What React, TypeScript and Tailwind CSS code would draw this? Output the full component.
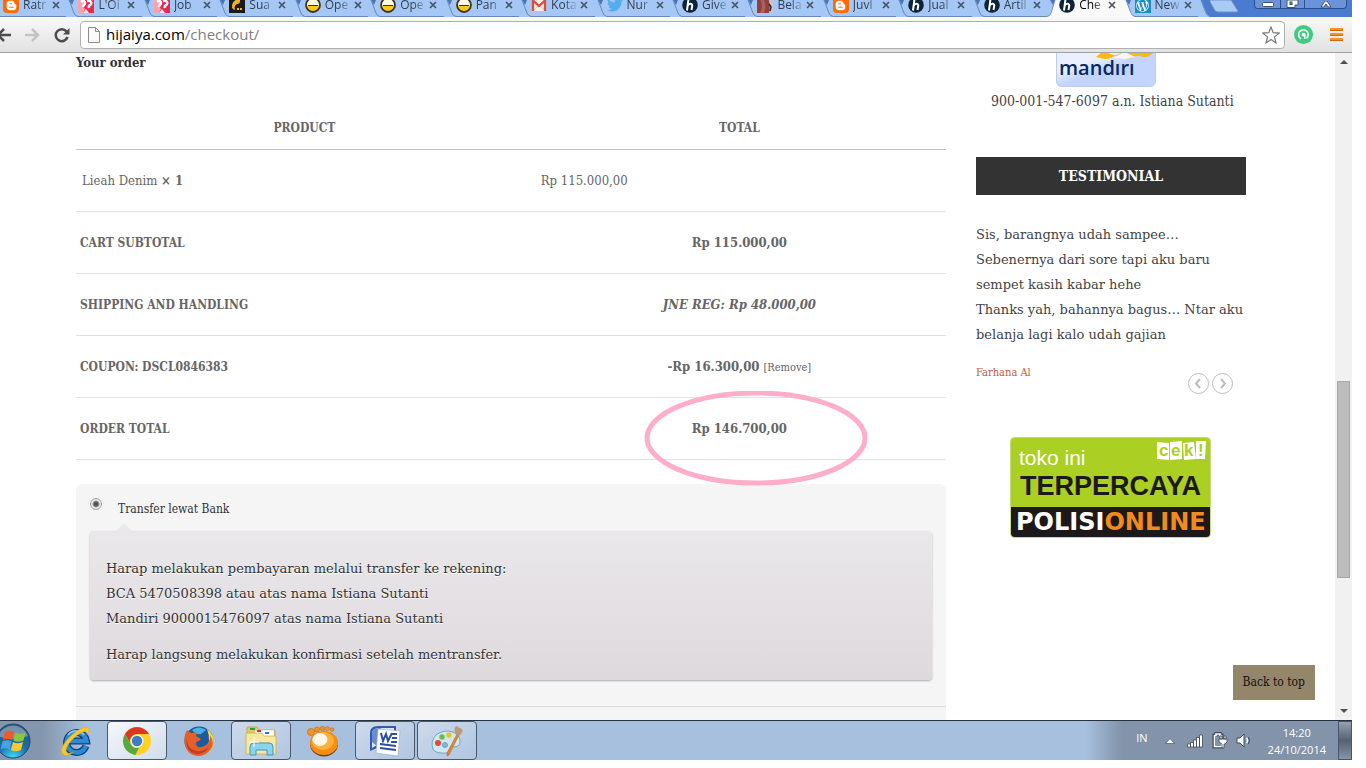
import type { ReactNode } from "react";
import { FaBloggerB, FaTwitter, FaWordpressSimple } from "react-icons/fa";

interface TabItem {
  title: string;
  icon: ReactNode;
  active?: boolean;
}

function BloggerIcon() {
  return (
    <span className="flex size-4 items-center justify-center rounded-sm bg-[#ff6a00] text-white">
      <FaBloggerB size={11} />
    </span>
  );
}

function RedIcon() {
  return (
    <svg viewBox="0 0 16 16" className="size-4">
      <rect width="16" height="16" fill="#e52a50" />
      <path d="M0 0h7l-2 4 2 2-2 3 2 3-2 4H0z" fill="#f4a3b1" />
      <path d="M3 5c2-2 4-1 4 1s-2 2-2 4M9 4c3-1 5 1 4 3s-3 1-2 4" stroke="#fff" strokeWidth="2.500" fill="none" />
      <path d="M5 16l3-4 3 4z" fill="#fbe3e6" />
    </svg>
  );
}

function BlackIcon() {
  return (
    <svg viewBox="0 0 16 16" className="size-4">
      <rect width="16" height="16" fill="#1c1a18" />
      <path d="M10 2C6 2 3 6 3 9s1 3 3 4c-1-3 0-5 2-6 2 0 3-1 3-3 0-1 0-2-1-2z" fill="#f5b324" />
      <path d="M8 12h6" stroke="#f5b324" strokeWidth="2" strokeDasharray="2 1" />
    </svg>
  );
}

function BowlIcon() {
  return (
    <svg viewBox="0 0 16 16" className="size-4">
      <circle cx="8" cy="8" r="7" fill="#fffbe2" />
      <path d="M1.500 8.500h13c0 3-2.500 6-6.500 6s-6.500-3-6.500-6z" fill="#ffc91c" />
      <path d="M3 8.500h10" stroke="#42321d" />
      <circle cx="8" cy="8" r="7" fill="none" stroke="#42321d" strokeWidth="1.800" />
    </svg>
  );
}

function GmailIcon() {
  return (
    <svg viewBox="0 0 16 16" className="size-4">
      <rect x="1" y="2.500" width="14" height="11.500" rx="1" fill="#f1efec" />
      <path d="M3 13l4-4m6 4L9 9" stroke="#cfcac4" />
      <path d="M2 14V3.500l6 5.500 6-5.500V14" fill="none" stroke="#dc4b3e" strokeWidth="2.300" />
    </svg>
  );
}

function HijaiyaIcon() {
  return (
    <svg viewBox="0 0 16 16" className="size-4">
      <circle cx="8" cy="8" r="7.800" fill="#0d2438" />
      <path d="M6.500 2L5 13.500M5.800 8.500c1-2 4.500-2.500 4.500 0L9.500 13" stroke="#fff" strokeWidth="2" fill="none" />
    </svg>
  );
}

function PhotoIcon() {
  return (
    <svg viewBox="0 0 16 16" className="size-4">
      <rect width="16" height="16" fill="#8d4141" />
      <path d="M11 0h5v16h-4c1-5 1-9-1-16z" fill="#c7c4cc" />
      <path d="M4 0c4 3 6 8 3 16H3C6 10 5 5 2 0z" fill="#ad5f5a" />
      <path d="M12 7l2 3-1 4" stroke="#33262c" strokeWidth="1.500" fill="none" />
    </svg>
  );
}

const tabs: TabItem[] = [
  { title: "Ratr", icon: <BloggerIcon /> },
  { title: "L'Oi", icon: <RedIcon /> },
  { title: "Job", icon: <RedIcon /> },
  { title: "Sua", icon: <BlackIcon /> },
  { title: "Ope", icon: <BowlIcon /> },
  { title: "Ope", icon: <BowlIcon /> },
  { title: "Pan", icon: <BowlIcon /> },
  { title: "Kota", icon: <GmailIcon /> },
  { title: "Nur", icon: <FaTwitter size={16} color="#55acee" /> },
  { title: "Give", icon: <HijaiyaIcon /> },
  { title: "Bela", icon: <PhotoIcon /> },
  { title: "Juvl", icon: <BloggerIcon /> },
  { title: "Jual", icon: <HijaiyaIcon /> },
  { title: "Artil", icon: <HijaiyaIcon /> },
  { title: "Che", icon: <HijaiyaIcon />, active: true },
  {
    title: "New",
    icon: (
      <span className="flex size-4 items-center justify-center bg-[#1e8cbe] text-white">
        <FaWordpressSimple size={13} />
      </span>
    ),
  },
];

const totals = [
  { label: "CART SUBTOTAL", value: "Rp 115.000,00" },
  { label: "SHIPPING AND HANDLING", value: "JNE REG: Rp 48.000,00", italic: true },
  { label: "COUPON: DSCL0846383", value: "-Rp 16.300,00", removable: true },
  { label: "ORDER TOTAL", value: "Rp 146.700,00", circled: true },
];

function Tab({ tab, beforeActive, last }: { tab: TabItem; beforeActive: boolean; last: boolean }) {
  const fill = tab.active ? "#f9f9f9" : "#a4c7f5";
  return (
    <div className={`flex h-[17px] min-w-0 flex-1 ${tab.active ? "bg-[#f9f9f9]" : "border-b border-[#6789b6] bg-[#a4c7f5]"}`}>
      <div className="-mt-[3px] flex h-4 min-w-0 flex-1 items-center">
        <span className="shrink-0">{tab.icon}</span>
        <span
          className={`ml-1 w-[27px] shrink-0 leading-4 whitespace-nowrap [mask-image:linear-gradient(to_right,#000_50%,transparent)] ${tab.active ? "text-black" : "text-[#333c4c]"}`}
        >
          {tab.title}
        </span>
        <button type="button" aria-label="Close tab" className="ml-0.5 shrink-0">
          <svg viewBox="0 0 8 8" className="size-2" stroke="#4b5462" strokeWidth="1.700">
            <path d="M1 1l6 6M7 1L1 7" />
          </svg>
        </button>
      </div>
      <svg viewBox="0 0 12 17" className="h-[17px] w-3 shrink-0">
        <rect width="12" height="17" fill={last ? "#4b7bce" : beforeActive ? "#f9f9f9" : "#a4c7f5"} />
        {beforeActive ? (
          <path d="M0 0h8L3 14l-3 3z" fill={fill} />
        ) : (
          <path d="M0 0h3l6 14 3 3H0z" fill={fill} />
        )}
        {!last && <path d="M3 0h5L6 5z" fill="#4b73b8" />}
        {beforeActive ? (
          <path d="M8 0L4 13q-1 3-4 3.500" fill="none" stroke="#6789b6" />
        ) : (
          <path d="M3 0l5 13q1 3 4 3.500" fill="none" stroke="#6789b6" />
        )}
      </svg>
    </div>
  );
}

function BrowserBar() {
  return (
    <header className="shrink-0 font-['Open_Sans',sans-serif]">
      <div className="flex h-[17px] bg-[#4b7bce] text-xs">
        <div className="w-[3px] border-b border-[#6789b6] bg-[#a4c7f5]" />
        <nav className="flex min-w-0 flex-1">
          {tabs.map((tab, index) => (
            <Tab key={index} tab={tab} beforeActive={!!tabs[index + 1]?.active} last={index === tabs.length - 1} />
          ))}
        </nav>
        <button type="button" aria-label="New tab" className="h-[13px] w-8">
          <svg viewBox="0 0 32 13" className="h-[13px] w-8">
            <path d="M-1 0h22l7 11q0 1-2 1H8q-3 0-4-3z" fill="#a9caf5" stroke="#6f93c9" />
          </svg>
        </button>
        <div className="ml-3 flex h-[9px] w-[93px] rounded-b border border-t-0 border-[#2e4f8c] bg-[#6b93db]">
          <button type="button" aria-label="Minimize" className="flex w-[26px] items-center justify-center border-r border-[#2e4f8c]">
            <svg viewBox="0 0 12 5" className="h-[5px] w-3">
              <rect x=".5" y=".5" width="11" height="4" rx="1" fill="#fff" stroke="#42516a" />
            </svg>
          </button>
          <button type="button" aria-label="Restore" className="flex w-6 items-center justify-center border-r border-[#2e4f8c]">
            <svg viewBox="0 0 13 8" className="h-2 w-[13px]" fill="#fff" stroke="#42516a">
              <path d="M4 0h8v5H9v2.500H1V0z" />
              <rect x="4" y="2" width="2" height="2.500" fill="#5f83c3" />
            </svg>
          </button>
          <button type="button" aria-label="Close" className="flex flex-1 items-center justify-center">
            <svg viewBox="0 0 12 7" className="h-[7px] w-3">
              <path d="M1 6l4-6h2l4 6H8L6 3 4 6z" fill="#fff" stroke="#42516a" />
            </svg>
          </button>
        </div>
        <div className="w-[5px]" />
      </div>

      <div className="flex h-9 items-center border-b border-[#a3a3a3] bg-linear-to-b from-[#f9f9f9] to-[#e2e2e2]">
        <button type="button" aria-label="Back" className="w-3">
          <svg viewBox="0 0 12 14" className="h-3.5 w-3" fill="none" stroke="#4d4d4d" strokeWidth="2.500">
            <path d="M0 7h11M4 1L-2 7l6 6" />
          </svg>
        </button>
        <button type="button" aria-label="Forward" className="ml-3 w-4">
          <svg viewBox="0 0 16 14" className="h-3.5 w-4" fill="none" stroke="#c3c3c3" strokeWidth="2.500">
            <path d="M1 7h13M8 1l6 6-6 6" />
          </svg>
        </button>
        <button type="button" aria-label="Reload" className="ml-3.5 w-4">
          <svg viewBox="0 0 16 16" className="size-4">
            <path d="M12.500 4.500A6 6 0 1 0 13.500 10" fill="none" stroke="#4d4d4d" strokeWidth="2.500" />
            <path d="M15.500 1v6.500H9z" fill="#4d4d4d" />
          </svg>
        </button>
        <div className="ml-2.5 flex h-7 flex-1 items-center rounded-sm border border-[#b0b0b0] bg-white pr-1 pl-[7px]">
          <svg viewBox="0 0 12 16" className="h-4 w-3 shrink-0" fill="#fafafa" stroke="#8d8d8d">
            <path d="M.5.5h7l4 4v11H.5zM7.500.5v4h4" />
          </svg>
          <a href="#checkout" className="ml-1.5 flex-1 text-[15px] text-[#808080]">
            <span className="text-black">hijaiya.com</span>/checkout/
          </a>
          <button type="button" aria-label="Bookmark this page">
            <svg viewBox="0 0 18 18" className="size-[18px]" fill="#fff" stroke="#777" strokeWidth="1.200">
              <path d="M9 1l2.200 5.700 6 .4-4.700 3.800L14 17l-5-3.400L4 17l1.500-6.100L.8 7.100l6-.4z" />
            </svg>
          </button>
        </div>
        <button type="button" aria-label="Extension" className="ml-[9px]">
          <svg viewBox="0 0 19 19" className="size-[19px]">
            <circle cx="9.500" cy="9.500" r="9.500" fill="#3fcb80" />
            <path d="M7 13.800A4.800 4.800 0 1 1 12.500 13.300" fill="none" stroke="#fff" strokeWidth="1.600" />
            <circle cx="9.600" cy="9.600" r="1.900" fill="#fff" />
            <path d="M10.800 9.500v4.500" stroke="#fff" strokeWidth="1.600" />
          </svg>
        </button>
        <button type="button" aria-label="Menu" className="mr-[9px] ml-[17px]">
          <svg viewBox="0 0 13 13" className="size-[13px]" fill="#f6921e">
            <path d="M0 0h13v3H0zM0 5h13v3H0zM0 10h13v3H0z" />
            <path d="M0 2h13v1H0zM0 7h13v1H0zM0 12h13v1H0z" fill="#d9660d" />
          </svg>
        </button>
      </div>
    </header>
  );
}

function OrderTable() {
  return (
    <table className="mt-8 w-full table-fixed border-collapse text-[13px] text-[#666]">
      <thead>
        <tr className="h-11 border-b border-[#c4c4c4]">
          <th className="w-[52.5%] pt-0.5 text-xs">PRODUCT</th>
          <th className="pt-0.5 text-xs">TOTAL</th>
        </tr>
      </thead>
      <tbody>
        <tr className="h-[62px] border-b border-[#e2e2e2]">
          <td className="pt-0.5 pl-1.5">
            Lieah Denim <strong>× 1</strong>
          </td>
          <td className="pt-0.5 pl-2">Rp 115.000,00</td>
        </tr>
        {totals.map((row) => (
          <tr key={row.label} className="h-[62px] border-b border-[#e2e2e2]">
            <th className="pt-0.5 pl-1 text-left text-xs">{row.label}</th>
            <td className="pt-0.5 text-center">
              <span className="relative inline-block">
                <strong className={row.italic ? "italic" : ""}>{row.value}</strong>
                {row.removable && (
                  <a href="#remove" className="ml-1 text-[11px]">
                    [Remove]
                  </a>
                )}
                {row.circled && (
                  <svg viewBox="0 0 224 96" className="absolute -top-7 left-1/2 -ml-24 h-24 w-56">
                    <ellipse cx="113" cy="47" rx="109" ry="45" fill="none" stroke="#ffaec9" strokeWidth="5" />
                  </svg>
                )}
              </span>
            </td>
          </tr>
        ))}
      </tbody>
    </table>
  );
}

function Payment() {
  return (
    <div className="mt-6 rounded-t-md bg-[#f5f5f5] text-[#333]">
      <div className="px-3.5 pt-3">
        <div className="flex h-[35px] gap-4">
          <input
            type="radio"
            id="bank"
            name="payment"
            defaultChecked
            className="mt-0.5 size-3 appearance-none rounded-full border border-[#9d9d9d] bg-[radial-gradient(circle,#555_0_2px,#eee_4px)]"
          />
          <label htmlFor="bank" className="pt-[3px] text-xs leading-5">
            Transfer lewat Bank
          </label>
        </div>
        <div className="relative rounded-sm bg-linear-to-b from-[#eae8ea] to-[#ded9dd] px-4 pt-[25px] pb-[13px] font-['DejaVu_Serif',serif] text-[13px] leading-[25px] shadow-[0_1px_2px_rgba(0,0,0,0.3)] [text-shadow:0_1px_0_#fff]">
          <div className="absolute -top-2 left-[26px] border-x-8 border-b-8 border-x-transparent border-b-[#eae8ea]" />
          <p>
            Harap melakukan pembayaran melalui transfer ke rekening:
            <br />
            BCA 5470508398 atau atas nama Istiana Sutanti
            <br />
            Mandiri 9000015476097 atas nama Istiana Sutanti
          </p>
          <p className="mt-[11px]">Harap langsung melakukan konfirmasi setelah mentransfer.</p>
        </div>
      </div>
      <div className="mt-[26px] h-10 border-t border-[#dcdcdc]" />
    </div>
  );
}

function Sidebar() {
  return (
    <aside className="w-[270px] shrink-0 text-[#444]">
      <svg viewBox="0 0 100 34" className="ml-20 h-[34px] w-[100px]">
        <defs>
          <linearGradient id="card" x2="1" y2="1">
            <stop offset="0.300" stopColor="#eaf0ff" />
            <stop offset="0.500" stopColor="#c3d4fd" />
          </linearGradient>
        </defs>
        <path d="M.5-1v29q0 5.500 6 5.500h87q6 0 6-5.500V-1z" fill="url(#card)" stroke="#bccdf4" />
        <path d="M40 4c4-3 7-7 12-4 5 2 8 4 13 0h32c-4 4-8 5-13 3-5-1-8 3-13 3-5-1-7-4-12-3-6 3-9 4-15 2z" fill="#f9b915" />
        <path d="M58 5l8-5h5l8 4-9 2z" fill="#f4f7ff" />
        <text x="3" y="22" fontFamily="Open Sans, sans-serif" fontSize="20" fontWeight="600" fill="#06285f">
          mandırı
        </text>
      </svg>
      <p className="mt-1 pl-[15px] text-sm leading-5 whitespace-nowrap">900-001-547-6097 a.n. Istiana Sutanti</p>
      <h2 className="mt-[46px] bg-[#333] text-center text-sm leading-[38px] font-bold text-white">TESTIMONIAL</h2>
      <p className="mt-[27px] font-['DejaVu_Serif',serif] text-[13px] leading-[25px] whitespace-nowrap">
        Sis, barangnya udah sampee…
        <br />
        Sebenernya dari sore tapi aku baru
        <br />
        sempet kasih kabar hehe
        <br />
        Thanks yah, bahannya bagus… Ntar aku
        <br />
        belanja lagi kalo udah gajian
      </p>
      <div className="mt-4 flex justify-between pr-[13px]">
        <span className="text-[11px] leading-5 text-[#bd5b38]">Farhana Al</span>
        <div className="mt-2.5 flex gap-[3px]">
          {["M12 6l-4 4.500 4 4.500", "M9 6l4 4.500L9 15"].map((path, index) => (
            <button key={path} type="button" aria-label={index ? "Next" : "Previous"}>
              <svg viewBox="0 0 21 21" className="size-[21px]" fill="none" stroke="#bdbdbd">
                <circle cx="10.500" cy="10.500" r="10" />
                <path d={path} strokeWidth="2" />
              </svg>
            </button>
          ))}
        </div>
      </div>
      <svg viewBox="0 0 201 101" className="mt-[43px] ml-[34px] h-[101px] w-[201px]">
        <rect x=".5" y=".5" width="200" height="100" rx="4" fill="#abcf22" stroke="#c5d981" />
        <path d="M1 70h199v26q0 4-4 4H5q-4 0-4-4z" fill="#1d191a" />
        <text x="9" y="28" fontFamily="Liberation Sans, sans-serif" fontSize="21" fill="#fff">
          toko ini
        </text>
        <text x="10" y="58" fontFamily="Liberation Sans, sans-serif" fontSize="27" fontWeight="700" fill="#1d191a">
          TERPERCAYA
        </text>
        <text x="6" y="93" fontFamily="DejaVu Sans, sans-serif" fontSize="24" fontWeight="700" fill="#fff">
          POLISI<tspan fill="#f38a1c">ONLINE</tspan>
        </text>
        <path d="M147 5l12 1v17l-12-1zM160 5l12-1v18l-12 1zM173 6l11-1 2 17-12 1zM186 4h10l-1 18h-9z" fill="#fff" />
        <g fontFamily="Liberation Sans, sans-serif" fontSize="17" fontWeight="700" fill="#abcf22">
          <text x="149" y="19">c</text>
          <text x="161" y="19">e</text>
          <text x="174" y="19">k</text>
          <text x="188" y="19">!</text>
        </g>
      </svg>
    </aside>
  );
}

function Scrollbar() {
  return (
    <div className="flex w-[17px] shrink-0 flex-col items-center bg-[#f1f1f1]">
      <svg viewBox="0 0 17 17" className="size-[17px]" fill="#505050">
        <path d="M5 11l4-4 4 4z" />
      </svg>
      <div className="grow-[312]" />
      <div className="w-[13px] grow-[196] border border-[#a8a8a8] bg-[#bcbcbc]" />
      <div className="grow-[125]" />
      <svg viewBox="0 0 17 17" className="size-[17px]" fill="#505050">
        <path d="M5 6l4 4 4-4z" />
      </svg>
    </div>
  );
}

function StartOrb() {
  return (
    <svg viewBox="0 0 36 36" className="size-9">
      <defs>
        <radialGradient id="orb" cx=".5" cy="1" r="0.900">
          <stop offset="0" stopColor="#3fe0ff" />
          <stop offset=".5" stopColor="#1a70a8" />
          <stop offset="1" stopColor="#2a557f" />
        </radialGradient>
      </defs>
      <circle cx="18" cy="18" r="17" fill="url(#orb)" stroke="#24486b" />
      <path d="M3 13a16 16 0 0 1 30 0q-15 6-30 0z" fill="#fff" opacity=".35" />
      <path d="M10 9q4.500-2.500 9 0l-2 8q-4.500-2.500-9 0z" fill="#f0592a" />
      <path d="M20.500 9.500q4.500 2.500 10 0l-2 8q-5.500 2.500-10 0z" fill="#8cc63f" />
      <path d="M7.500 18.500q4.500-2.500 9 0l-2 8q-4.500-2.500-9 0z" fill="#4aa3e0" />
      <path d="M18 19q4.500 2.500 10 0l-2 8q-5.500 2.500-10 0z" fill="#fdc82f" />
    </svg>
  );
}

function ExplorerIcon() {
  return (
    <svg viewBox="0 0 32 32" className="size-8">
      <path d="M27 21a10 10 0 1 1 0.500-5H11" fill="none" stroke="#123f73" strokeWidth="7" />
      <path d="M27 21a10 10 0 1 1 0.500-5H11" fill="none" stroke="#2b8bd6" strokeWidth="4.500" />
      <path d="M9 10a10 10 0 0 1 16 0" fill="none" stroke="#7cc3f0" strokeWidth="2" />
      <path d="M5 30C-2 27 7 13 18 6 25 1 31 1 30 5c0 2-1 4-2 5 1-3 0-5-4-3C14 11 4 24 8 28c2 1 4 0 6-1-3 3-6 4-9 3z" fill="#f7c92f" stroke="#d99f17" strokeWidth=".5" />
    </svg>
  );
}

function ChromeIcon() {
  return (
    <svg viewBox="0 0 32 32" className="size-8">
      <circle cx="16" cy="16" r="14" fill="#fdd225" />
      <path d="M3.900 9A14 14 0 0 1 28.100 9H16a7 7 0 0 0-6.500 9.500z" fill="#dc3628" />
      <path d="M3.900 9l6 10.500A7 7 0 0 0 18 22.700L14.500 30A14 14 0 0 1 3.900 9z" fill="#58a843" />
      <circle cx="16" cy="16" r="6.500" fill="#f4f4f4" />
      <circle cx="16" cy="16" r="5.200" fill="#3b7ec8" />
    </svg>
  );
}

function FirefoxIcon() {
  return (
    <svg viewBox="0 0 32 32" className="size-8">
      <circle cx="16" cy="16" r="14.500" fill="#1c5b9e" />
      <path d="M9 5q7-5 14 0l-5 4q-5 1-9-4z" fill="#4bb0e5" />
      <path d="M24 4q8 6 6.500 15Q29 29 17 30.500L22 24q7-7 2-20z" fill="#ffdb3c" />
      <path d="M4 5l4 3q4-1 6 0l-1 3 5 3-2 2q-3 0-3 3 1 4 6 3l4-2q5-4 4-10 5 8 1 14-5 7-13 7Q4 30 2 20 0 12 4 5z" fill="#e4602b" />
      <path d="M4 12q-1 12 10 14 8 1 12-5-3 8-12 8Q1 27 4 12z" fill="#c93924" />
    </svg>
  );
}

function FolderIcon() {
  return (
    <svg viewBox="0 0 32 32" className="size-8">
      <path d="M2 3q0-1 1-1h9l2 3h16v8H2z" fill="#e6c75f" stroke="#bf9b40" strokeWidth=".7" />
      <path d="M10 5h19v7H10z" fill="#fff" stroke="#c7c19d" strokeWidth=".5" />
      <path d="M5 3h5v2H5z" fill="#27a33a" />
      <path d="M12 5h4v2h-4z" fill="#cc3727" />
      <path d="M20 7h4v2h-4z" fill="#2779d0" />
      <path d="M1 8h16l2 3h12v18H1z" fill="#f8e79d" stroke="#c9aa4d" strokeWidth=".7" />
      <path d="M5 30V22q0-4 4-4h15q4 0 4 4v8h-6v-5H11v5z" fill="#8bd4ed" stroke="#4197ba" />
      <path d="M9 12v10M4 17h10" stroke="#fff" />
    </svg>
  );
}

function PawIcon() {
  return (
    <svg viewBox="0 0 32 32" className="size-8">
      <g fill="#f6921e" stroke="#b96210" strokeWidth=".5">
        <circle cx="4" cy="7" r="3.600" />
        <circle cx="10" cy="4.500" r="2.600" />
        <circle cx="15.500" cy="3.500" r="2.300" />
        <circle cx="20.500" cy="3.500" r="2" />
        <circle cx="25" cy="4.500" r="1.800" />
      </g>
      <ellipse cx="17" cy="19" rx="14" ry="12.500" fill="#6b3f14" />
      <ellipse cx="17" cy="18" rx="14" ry="12" fill="#fa8c12" />
      <ellipse cx="16" cy="16" rx="11" ry="9" fill="#ffaf3a" />
      <ellipse cx="13" cy="14.500" rx="7.500" ry="6.500" fill="#fff7ea" />
    </svg>
  );
}

function WordIcon() {
  return (
    <svg viewBox="0 0 32 32" className="size-8">
      <path d="M1 26V8q0-7 8-7h18v22H8z" fill="#3559ad" />
      <path d="M3 23V9q0-6 7-6h15v17H8z" fill="#dce7f7" />
      <path d="M3 17V9q0-6 7-6h2L9 22z" fill="#6b8bce" />
      <path d="M9 4l22 2-2 25-22-3z" fill="#fff" stroke="#97a9cb" strokeWidth=".6" />
      <path d="M12 8l2 8 3-7 2 7 4-8" fill="none" stroke="#2b4ea1" strokeWidth="2" />
      <path d="M23 9h5M23 13h5M22 17h6M11 19l16 2M11 23l16 2" stroke="#2b4ea1" strokeWidth="1.800" />
    </svg>
  );
}

function PaintIcon() {
  return (
    <svg viewBox="0 0 32 32" className="size-8">
      <path d="M2 24Q-1 16 5 10q8-6 17-3 8 4 7 11-1 4-7 4-3 0-4 3-1 4-7 3-7 0-9-4z" fill="#cde9f5" stroke="#6fa7c6" />
      <circle cx="7" cy="18" r="3" fill="#e94733" />
      <circle cx="11" cy="12" r="2.700" fill="#6dbb45" />
      <circle cx="18" cy="10" r="2.700" fill="#f6bc29" />
      <circle cx="14" cy="20" r="2.500" fill="#82b6dc" stroke="#4f86b4" strokeWidth=".6" />
      <path d="M26 9l2 1-10 20-2 1 0-3z" fill="#e88527" stroke="#b9611a" strokeWidth=".5" />
      <path d="M25 9q-3-5 0-8l6 3q2 3-3 7z" fill="#bd9a78" />
    </svg>
  );
}

const programs = [
  { name: "Internet Explorer", icon: <ExplorerIcon />, style: "border-transparent" },
  { name: "Chrome", icon: <ChromeIcon />, style: "border-[#49586b] bg-linear-to-br from-[#f5f8fc] to-[#cfdded]" },
  { name: "Firefox", icon: <FirefoxIcon />, style: "border-transparent" },
  { name: "Explorer", icon: <FolderIcon />, style: "border-[#49586b] bg-linear-to-br from-[#cddaea] to-[#b1c6e2]" },
  { name: "GOM Player", icon: <PawIcon />, style: "border-transparent" },
  { name: "Word", icon: <WordIcon />, style: "border-[#49586b] bg-linear-to-br from-[#cddaea] to-[#b1c6e2]" },
  { name: "Paint", icon: <PaintIcon />, style: "border-[#49586b] bg-linear-to-br from-[#cddaea] to-[#b1c6e2]" },
];

function Taskbar() {
  return (
    <footer className="flex h-10 shrink-0 border-t border-[#26323f] bg-[#a7c0de] font-['Open_Sans',sans-serif]">
      <div className="flex w-[86px] items-center bg-linear-to-r from-[#8496ad] from-50% to-[#a7c0de]">
        <button type="button" aria-label="Start" className="-ml-[5px]">
          <StartOrb />
        </button>
      </div>
      <div className="-ml-[41px] flex flex-1 gap-0.5">
        {programs.map((program) => (
          <button
            key={program.name}
            type="button"
            aria-label={program.name}
            className={`flex h-[39px] w-[60px] items-center justify-center rounded-sm border ${program.style}`}
          >
            {program.icon}
          </button>
        ))}
      </div>
      <div className="flex items-center bg-linear-to-r from-[#a7c0de] to-[#8293aa] to-[36px] pl-[50px] text-[11px] text-white">
        <span className="pb-1">IN</span>
        <svg viewBox="0 0 10 7" className="ml-[17px] h-[7px] w-2.5">
          <path d="M.5 6.500L5 1.500l4.500 5z" fill="#fff" stroke="#46566b" strokeWidth=".7" />
        </svg>
        <svg viewBox="0 0 17 14" className="ml-3 h-3.5 w-[17px]" fill="#fff" stroke="#3d4a5b" strokeWidth=".8">
          <path d="M.5 10h3v3h-3zM3.500 8.500h3V13h-3zM6.500 6h3v7h-3zM9.500 3.500h3V13h-3zM12.500 1h3v12h-3z" />
        </svg>
        <svg viewBox="0 0 16 17" className="ml-2 h-[17px] w-4" fill="none">
          <path d="M2 3h2V1h4v2h2v12H2z" stroke="#3d4a5b" strokeWidth="3" />
          <path d="M2.500 3.500H4V2h4v1.500h1.500v11h-7z" stroke="#fff" strokeWidth="1.500" />
          <path d="M7 7h8v3l-2 2h-1v4h-2v-4l-3-2zM8 4h2v3H8zM12 4h2v3h-2z" fill="#fff" stroke="#3d4a5b" strokeWidth=".8" />
        </svg>
        <svg viewBox="0 0 15 15" className="ml-2 size-[15px]" fill="none">
          <path d="M1 5h3l4-4v13l-4-4H1z" fill="#fff" stroke="#3d4a5b" />
          <path d="M10.500 5q2 2.500 0 5" stroke="#fff" strokeWidth="1.500" />
          <path d="M12.500 4q2 3.500 0 7" stroke="#3d4a5b" />
        </svg>
        <time className="ml-[17px] text-center leading-[17px]">
          14:20
          <br />
          24/10/2014
        </time>
        <button
          type="button"
          aria-label="Show desktop"
          className="ml-3 h-[39px] w-3.5 border border-[#46566b] bg-linear-to-b from-[#94a1b1] via-[#566272] via-50% to-[#8795a7]"
        />
      </div>
    </footer>
  );
}

export default function CheckoutPage() {
  return (
    <div className="h-screen bg-white pr-3.5 pb-2">
      <div className="flex h-full flex-col overflow-hidden">
        <BrowserBar />
        <div className="relative flex min-h-0 flex-1 overflow-hidden font-['DejaVu_Serif_Condensed','DejaVu_Serif',serif]">
          <div className="flex min-w-0 flex-1 gap-[30px] overflow-hidden pr-[89px] pl-[76px]">
            <main className="min-w-0 flex-1">
              <h1 className="text-[13px] leading-5 font-bold text-[#333]">Your order</h1>
              <OrderTable />
              <Payment />
            </main>
            <Sidebar />
          </div>
          <Scrollbar />
          <a
            href="#top"
            className="absolute right-[37px] bottom-5 bg-[#94866b] px-2.5 text-xs leading-[35px] text-[#111]"
          >
            Back to top
          </a>
        </div>
        <Taskbar />
      </div>
    </div>
  );
}
